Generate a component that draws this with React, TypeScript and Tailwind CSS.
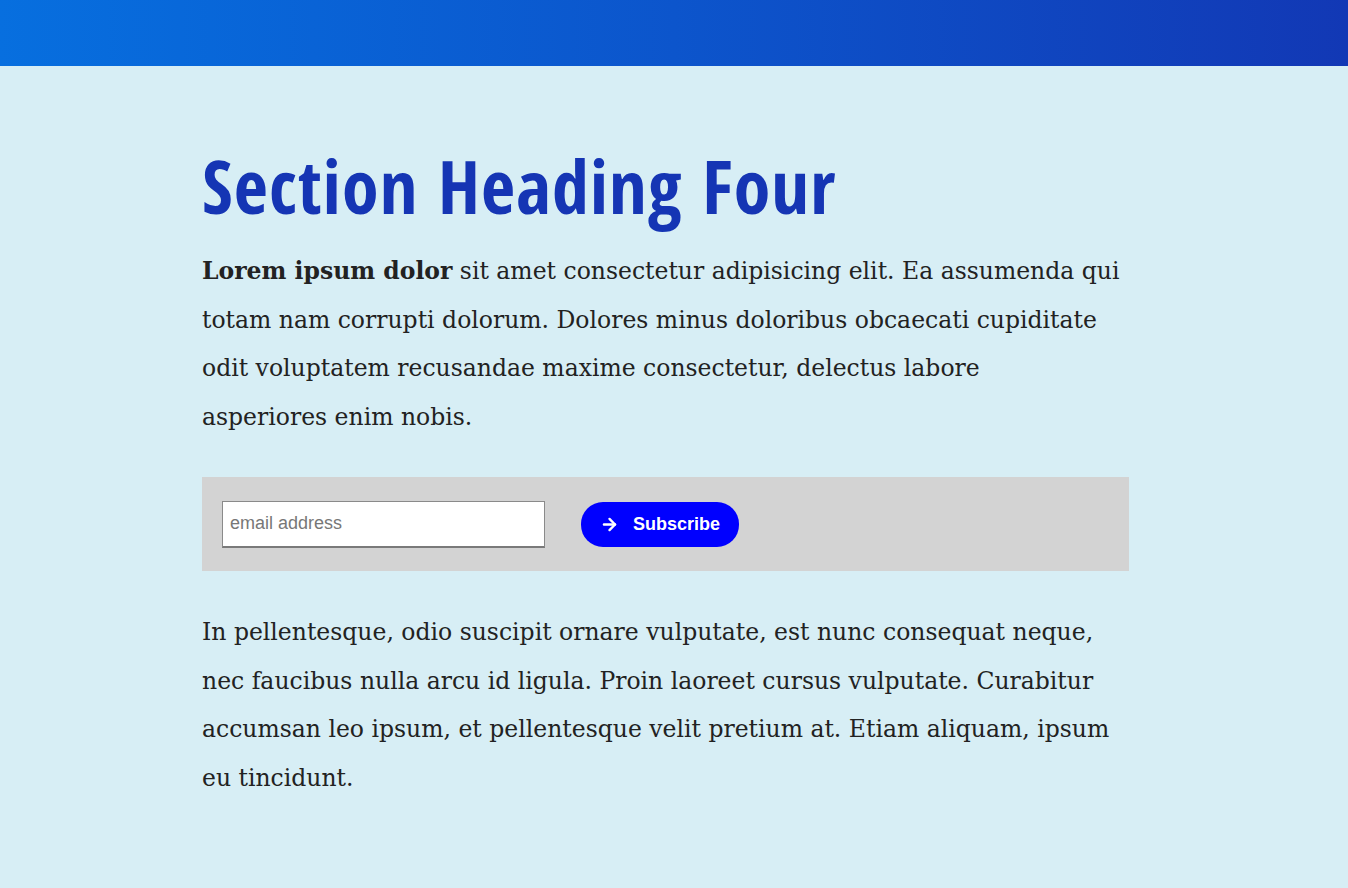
import { ArrowRight } from "lucide-react";

export default function App() {
    return (
        <div className="min-h-[888px] bg-[#d7eef5]">
            <header className="h-[66px] bg-gradient-to-r from-[#076fdf] via-[#0c55cc] to-[#1238b5]" />

            <main className="ml-[202px] w-[927px] pt-[75px] pb-20">
                <h1 className="text-[#1535b4] text-[74px] leading-[90px] font-semibold tracking-[1.2px] [font-family:'Open_Sans_Condensed','Open_Sans',sans-serif] [font-stretch:75%]">
                    Section Heading Four
                </h1>

                <p className="mt-[16px] text-[#222] text-[23.5px] leading-[48.5px] [font-family:'DejaVu_Serif',serif]">
                    <strong className="font-bold">Lorem ipsum dolor</strong> sit amet consectetur adipisicing elit. Ea assumenda qui totam nam corrupti dolorum. Dolores minus doloribus obcaecati cupiditate odit voluptatem recusandae maxime consectetur, delectus labore
                    <br />
                    asperiores enim nobis.
                </p>

                <form
                    className="mt-[36px] h-[94px] bg-[#d3d3d3] flex items-center gap-9 px-5"
                    onSubmit={(e) => e.preventDefault()}
                >
                    <input
                        type="email"
                        placeholder="email address"
                        className="w-[323px] h-[47px] bg-white border border-[#8a8a8a] border-b-2 border-b-[#7a7a7a] px-[7px] text-[18px] text-[#333] placeholder:text-[#777] outline-none [font-family:'Liberation_Sans',Arial,sans-serif]"
                    />
                    <button
                        type="submit"
                        className="h-[45px] w-[158px] rounded-[22px] bg-[#0000ff] text-white flex items-center justify-center gap-[14px] text-[18px] font-bold [font-family:'Liberation_Sans',Arial,sans-serif]"
                    >
                        <ArrowRight size={19} strokeWidth={3} />
                        Subscribe
                    </button>
                </form>

                <p className="mt-[37px] text-[#222] text-[23.5px] leading-[48.5px] [font-family:'DejaVu_Serif',serif]">
                    In pellentesque, odio suscipit ornare vulputate, est nunc consequat neque, nec faucibus nulla arcu id ligula. Proin laoreet cursus vulputate. Curabitur accumsan leo ipsum, et pellentesque velit pretium at. Etiam aliquam, ipsum eu tincidunt.
                </p>
            </main>
        </div>
    );
}
